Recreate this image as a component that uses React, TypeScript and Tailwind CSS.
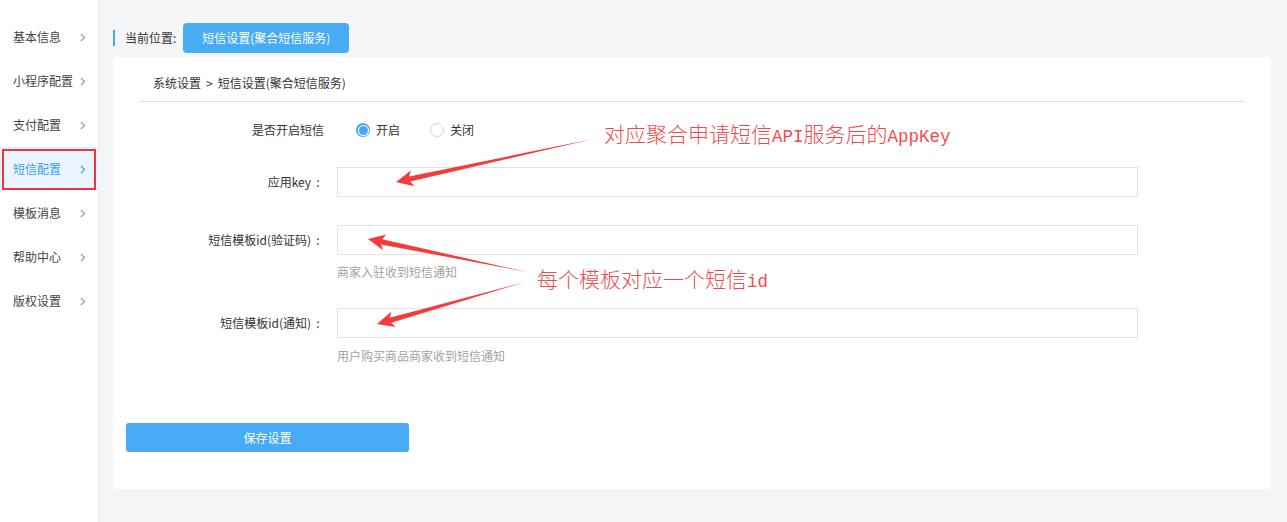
import React from "react";

const FONT = { fontFamily: '"Noto Sans CJK SC", "Noto Sans", sans-serif' };
const MONO = { fontFamily: '"Liberation Mono", monospace' };

function arrow(tx: number, ty: number, px: number, py: number, hl = 15, sw = 2.6, hw = 8) {
  const dx = px - tx, dy = py - ty;
  const L = Math.hypot(dx, dy);
  const ux = dx / L, uy = dy / L;
  const nx = -uy, ny = ux;
  const bx = px - ux * hl, by = py - uy * hl;
  const pts = [
    [tx, ty],
    [bx + nx * sw + ux * 1, by + ny * sw + uy * 1],
    [bx + nx * hw - ux * 2, by + ny * hw - uy * 2],
    [px, py],
    [bx - nx * hw - ux * 2, by - ny * hw - uy * 2],
    [bx - nx * sw + ux * 1, by - ny * sw + uy * 1],
  ];
  return pts.map((p) => p.map((v) => v.toFixed(1)).join(",")).join(" ");
}

const Chevron = ({ active }: { active?: boolean }) => (
  <svg width="6" height="9" viewBox="0 0 6 9" className="shrink-0">
    <polyline points="1,1 4.5,4.5 1,8" fill="none" stroke={active ? "#3aa0f5" : "#9a9a9a"} strokeWidth="1.2" />
  </svg>
);

const menu = ["基本信息", "小程序配置", "支付配置", "短信配置", "模板消息", "帮助中心", "版权设置"];

function Radio({ checked, label }: { checked?: boolean; label: string }) {
  return (
    <div className="flex items-center">
      {checked ? (
        <span className="w-[14px] h-[14px] rounded-full bg-[#45a6f5] flex items-center justify-center">
          <span className="w-[11px] h-[11px] rounded-full bg-white flex items-center justify-center">
            <span className="w-[9px] h-[9px] rounded-full bg-[#45a6f5]" />
          </span>
        </span>
      ) : (
        <span className="w-[14px] h-[14px] rounded-full border border-[#d4d4d4] bg-white" />
      )}
      <span className="ml-[6px] text-[12px] text-[#333] leading-[16px]">{label}</span>
    </div>
  );
}

function Label({ text, colon }: { text: string; colon?: boolean }) {
  return (
    <div className="w-[224px] pr-[12px] flex justify-end items-center text-[12px] text-[#333]">
      <span>{text}</span>
      {colon && <span className="inline-block w-[14px] text-center">:</span>}
    </div>
  );
}

export default function App() {
  return (
    <div className="relative w-[1287px] h-[522px] flex bg-[#f4f5f7] overflow-hidden" style={FONT}>
      {/* Sidebar */}
      <div className="w-[99px] h-full bg-white border-r border-[#ebebeb] pt-[15px] shrink-0">
        {menu.map((m) => {
          const active = m === "短信配置";
          return (
            <div
              key={m}
              className={`relative h-[44px] flex items-center pl-[13px] pr-[12px] ${active ? "bg-[#ebf5ff]" : ""}`}
            >
              <span className={`text-[12px] leading-[16px] ${active ? "text-[#3aa0f5]" : "text-[#444]"}`}>{m}</span>
              <span className="ml-auto">
                <Chevron active={active} />
              </span>
              {active && (
                <div className="absolute left-[2px] right-[2px] top-[2px] bottom-[1px] border-2 border-[#f0363d]" />
              )}
            </div>
          );
        })}
      </div>

      {/* Main */}
      <div className="flex-1 pl-[14px] pr-[16px] pt-[23px]">
        <div className="flex items-center h-[30px]">
          <div className="w-[2px] h-[16px] bg-[#45a6f5]" />
          <span className="ml-[10px] text-[12px] text-[#333]">当前位置:</span>
          <div className="ml-[7px] w-[166px] h-[30px] rounded-[4px] bg-[#47acf5] flex items-center justify-center text-white text-[12px]">
            短信设置(聚合短信服务)
          </div>
        </div>

        <div className="mt-[4px] h-[432px] bg-white">
          <div className="mx-[27px] pt-[18px] pb-[10px] pl-[13px] border-b border-[#e0e0e0]">
            <span className="text-[12px] leading-[16px] text-[#333] flex items-center">
              系统设置<span className="mx-[5px]">&gt;</span>短信设置(聚合短信服务)
            </span>
          </div>

          {/* Row 1 */}
          <div className="mt-[13px] flex items-center h-[30px]">
            <div className="w-[224px] pr-[13px] text-right text-[12px] text-[#333]">是否开启短信</div>
            <div className="ml-[19px] flex items-center gap-[30px]">
              <Radio checked label="开启" />
              <Radio label="关闭" />
            </div>
          </div>

          {/* Row 2 */}
          <div className="mt-[22px] flex items-center h-[30px]">
            <Label text="应用key" colon />
            <div className="w-[801px] h-[30px] border border-[#e3e3e3] bg-white" />
          </div>

          {/* Row 3 */}
          <div className="mt-[28px] flex items-center h-[30px]">
            <Label text="短信模板id(验证码)" colon />
            <div className="w-[801px] h-[30px] border border-[#e3e3e3] bg-white" />
          </div>
          <div className="mt-[9px] pl-[224px] text-[12px] leading-[16px] text-[#a3a3a3]">商家入驻收到短信通知</div>

          {/* Row 4 */}
          <div className="mt-[28px] flex items-center h-[30px]">
            <Label text="短信模板id(通知)" colon />
            <div className="w-[801px] h-[30px] border border-[#e3e3e3] bg-white" />
          </div>
          <div className="mt-[10px] pl-[224px] text-[12px] leading-[16px] text-[#a3a3a3]">用户购买商品商家收到短信通知</div>

          <div className="mt-[59px] pl-[13px]">
            <div className="w-[283px] h-[29px] rounded-[3px] bg-[#47acf5] flex items-center justify-center text-white text-[12px]">
              保存设置
            </div>
          </div>
        </div>
      </div>

      {/* Annotations */}
      <svg className="absolute inset-0 pointer-events-none" width="1287" height="522">
        <polygon points={arrow(593, 139, 396, 182)} fill="#f53b3b" />
        <polygon points={arrow(527, 272, 368, 239)} fill="#f53b3b" />
        <polygon points={arrow(525, 282, 377, 324)} fill="#f53b3b" />
      </svg>
      <div className="absolute left-[604px] top-[121px] text-[21px] leading-[24px] font-light text-[#f24a4c] whitespace-nowrap">
        对应聚合申请短信<span className="text-[17.5px]" style={MONO}>API</span>服务后的<span className="text-[17.5px]" style={MONO}>AppKey</span>
      </div>
      <div className="absolute left-[537px] top-[266px] text-[21px] leading-[24px] font-light text-[#f24a4c] whitespace-nowrap">
        每个模板对应一个短信<span className="text-[17.5px]" style={MONO}>id</span>
      </div>
    </div>
  );
}
